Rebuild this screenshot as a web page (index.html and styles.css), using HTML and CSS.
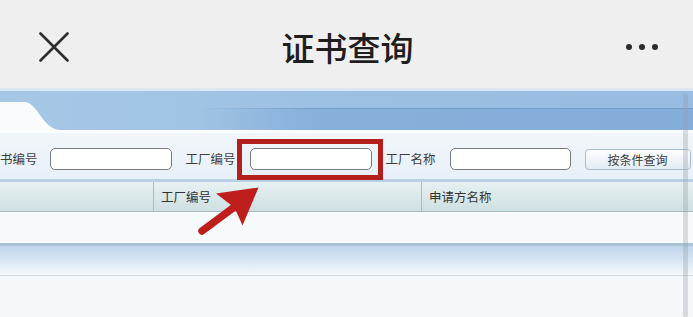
FILE: index.html
```html
<!DOCTYPE html>
<html lang="zh-CN">
<head>
<meta charset="utf-8">
<title>证书查询</title>
<link rel="stylesheet" href="styles.css">
</head>
<body>
<div class="page">
  <header class="topbar">
    <svg class="close" width="30" height="30" viewBox="0 0 30 30"><path d="M1.5 1.5 L28.5 28.5 M28.5 1.5 L1.5 28.5" stroke="#2e2e2e" stroke-width="2.6" stroke-linecap="round" fill="none"/></svg>
    <h1 class="title">证书查询</h1>
    <div class="more"><span></span><span></span><span></span></div>
  </header>

  <div class="tabband">
    <div class="tabrow">
      <svg class="tab" width="62" height="28" viewBox="0 0 62 28"><path d="M0 0 H24 C38 0 42 27 60 28 H0 Z" fill="#f9fbfd"/></svg>
      <div class="tabfill"></div>
    </div>
  </div>

  <div class="search">
    <span class="label first">书编号</span>
    <span class="input w1"></span>
    <span class="label">工厂编号</span>
    <span class="input w1"></span>
    <span class="label">工厂名称</span>
    <span class="input w2"></span>
    <span class="btn">按条件查询</span>
  </div>

  <div class="thead">
    <div class="th c1"></div>
    <div class="th c2">工厂编号</div>
    <div class="th c3">申请方名称</div>
  </div>
  <div class="row"></div>
  <div class="bar"></div>
  <div class="rest"></div>

  <div class="scroll"></div>
  <div class="highlight"></div>
  <svg class="arrow" width="80" height="60" viewBox="190 180 80 60">
    <path d="M202 231 L233 208" stroke="#bf1f1c" stroke-width="7.5" stroke-linecap="round" fill="none"/>
    <path d="M258.5 187.5 L216 193.5 L231 205 L236 211 L242.5 225.5 Z" fill="#bf1f1c"/>
  </svg>
</div>
</body>
</html>
```

FILE: styles.css
```css
html, body {
  margin: 0;
  padding: 0;
}
body {
  width: 693px;
  height: 317px;
  overflow: hidden;
  background: #f5f8fb;
  font-family: "Noto Sans CJK SC", "Noto Sans", sans-serif;
}
.page {
  position: relative;
  width: 693px;
  height: 317px;
  display: flex;
  flex-direction: column;
}
.topbar {
  height: 88px;
  flex: none;
  box-sizing: border-box;
  padding: 6px 35px 0 39px;
  display: flex;
  align-items: center;
  justify-content: space-between;
  background: #efefef;
}
.close {
  display: block;
}
.title {
  margin: 0;
  font-size: 33px;
  font-weight: 500;
  color: #1e1e1e;
  letter-spacing: 0;
  line-height: 1;
}
.more {
  display: flex;
  gap: 7px;
  width: 32px;
}
.more span {
  width: 6px;
  height: 6px;
  border-radius: 50%;
  background: #2b2b2b;
}
.tabband {
  height: 42px;
  flex: none;
  box-sizing: border-box;
  border-top: 3px solid #dbe7f2;
  background: linear-gradient(to right, #a7c7e6 0, #9cc0e3 50%, #98bce2 100%);
  display: flex;
  flex-direction: column;
}
.tabrow {
  margin-top: auto;
  height: 28px;
  display: flex;
  align-items: flex-end;
}
.tab {
  display: block;
  flex: none;
}
.tabfill {
  flex: 1;
  height: 22px;
  margin-left: -2px;
  box-sizing: border-box;
  background: linear-gradient(to right, rgba(128, 170, 215, 0) 0, rgba(128, 170, 215, 0) 140px, #86afda 260px, #84aed9 100%);
  border-top: 1px solid;
  border-image: linear-gradient(to right, rgba(110, 155, 205, 0) 140px, #729ecc 280px, #729ecc 100%) 1;
}
.search {
  height: 52px;
  flex: none;
  box-sizing: border-box;
  padding-top: 6px;
  border-top: 3px solid #fafcfe;
  border-bottom: 3px solid #b9cfe4;
  background: linear-gradient(#f1f6fa, #e8f0f7);
  display: flex;
  align-items: center;
  gap: 14px;
}
.label {
  font-size: 12.5px;
  color: #3d3d3d;
  white-space: nowrap;
  line-height: 1;
}
.label.first {
  margin-right: -2px;
}
.input {
  box-sizing: border-box;
  height: 22px;
  background: #ffffff;
  border: 1.5px solid #787a7d;
  border-radius: 5px;
}
.w1 { width: 122px; }
.w2 { width: 121px; }
.btn {
  box-sizing: border-box;
  width: 106px;
  height: 21px;
  border: 1px solid #a8bccd;
  border-radius: 4px;
  background: linear-gradient(#ffffff, #e2ebf3);
  font-size: 12px;
  color: #3a3a3a;
  display: flex;
  align-items: center;
  justify-content: center;
}
.thead {
  height: 30px;
  flex: none;
  box-sizing: border-box;
  display: flex;
  background: linear-gradient(#e6f1f2, #cfe0e2);
  border-bottom: 1px solid #a7bcc1;
}
.th {
  box-sizing: border-box;
  height: 100%;
  display: flex;
  align-items: center;
  padding-left: 7px;
  font-size: 12.5px;
  color: #333;
}
.c1 { width: 154px; border-right: 1px solid #a9bdc1; }
.c2 { width: 268px; border-right: 1px solid #a9bdc1; }
.c3 { flex: 1; }
.row {
  height: 31px;
  flex: none;
  background: #f7fafc;
}
.bar {
  height: 33px;
  flex: none;
  box-sizing: border-box;
  border-top: 3px solid #a9c2d6;
  border-bottom: 1px solid #cfdbe2;
  background: linear-gradient(#bfd5ec, #dce8f4 55%, #f6f9fc);
}
.rest {
  flex: 1;
  background: #f5f8fa;
}
.scroll {
  position: absolute;
  left: 683px;
  top: 94px;
  width: 5px;
  bottom: 0;
  background: rgba(150, 160, 170, 0.35);
  border-radius: 2px;
}
.highlight {
  position: absolute;
  left: 237px;
  top: 139px;
  width: 146px;
  height: 41px;
  box-sizing: border-box;
  border: 5px solid #b21f1d;
}
.arrow {
  position: absolute;
  left: 190px;
  top: 180px;
}
```
